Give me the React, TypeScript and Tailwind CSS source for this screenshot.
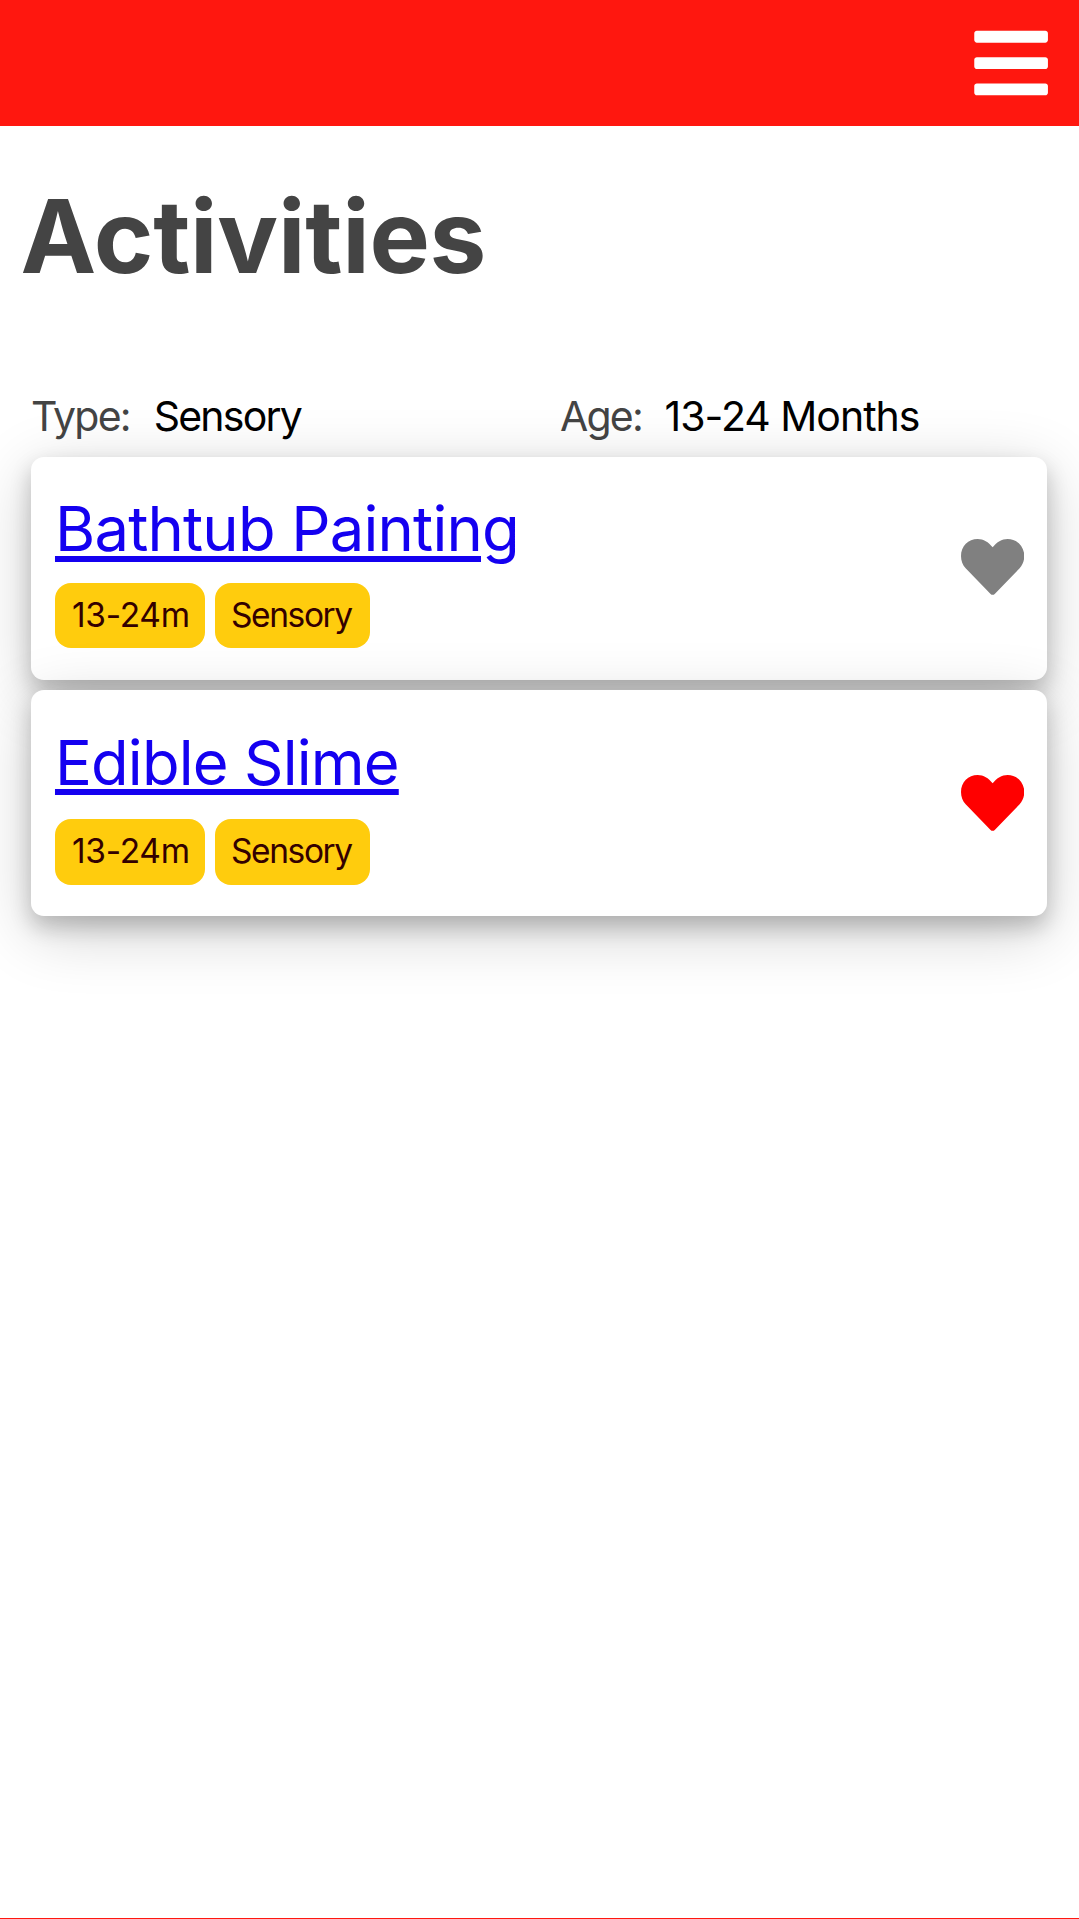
import { FaBars } from 'react-icons/fa'

const cardShadow = 'shadow-[0_10.5px_21px_0_rgba(0,0,0,0.2),0_15.7px_64px_0_rgba(0,0,0,0.2)]'

function Heart({ className }: { className: string }) {
  return (
    <svg viewBox="0 0 190 168" fill="currentColor" className={className} aria-hidden="true">
      <path d="M95 25C82 9 68 0 50 0C22 0 0 22 0 51C0 65 5 78 14 88L88 164Q95 171 102 164L176 88C185 78 190 65 190 51C190 22 168 0 140 0C122 0 108 9 95 25Z" />
    </svg>
  )
}

function Tag({ children, className }: { children: string; className: string }) {
  return (
    <span className={`flex h-[65.5px] items-center rounded-[16px] bg-[#ffcc0d] text-[33.5px] leading-none whitespace-nowrap text-[#330000] ${className}`}>
      {children}
    </span>
  )
}

function Activity({ title, liked, className, tagGap, titleClass }: { title: string; liked: boolean; className: string; tagGap: string; titleClass: string }) {
  return (
    <article className={`flex justify-between rounded-[13px] bg-white pr-[23.3px] pl-[23.7px] ${cardShadow} ${className}`}>
      <div className="flex flex-col items-start">
        <a href="#" className={`text-[61.5px] leading-[76px] text-[#1400f0] underline decoration-[5.5px] ${titleClass}`}>
          {title}
        </a>
        <div className={`flex gap-[10px] ${tagGap}`}>
          <Tag className="w-[150px] pl-[17px] tracking-[-0.3px]">13-24m</Tag>
          <Tag className="w-[155px] pl-[16px] tracking-[-1.4px]">Sensory</Tag>
        </div>
      </div>
      <Heart className={`h-[56px] w-[63.3px] ${liked ? 'mt-[50.3px] text-[#ff0000]' : 'mt-[48.3px] text-[#808080]'}`} />
    </article>
  )
}

export default function App() {
  return (
    <div className="flex h-[1919px] flex-col overflow-hidden bg-white font-['Inter',sans-serif]">
      <header className="flex h-[126px] shrink-0 items-center justify-end bg-[#ff170f] pr-[26px]">
        <FaBars className="size-[84.2px] text-white" />
      </header>
      <h1 className="mt-[49px] pl-[20.5px] text-[101.5px] leading-[122px] font-bold tracking-[-0.25px] text-[#444444]">Activities</h1>
      <div className="mt-[89px] flex h-[71px] px-[31px] pt-[5px] text-[41px] leading-[50px] tracking-[-1.8px] text-black">
        <div className="flex w-[529px] gap-[24px]">
          <span className="text-[#444444]">Type:</span>
          <span>Sensory</span>
        </div>
        <div className="flex gap-[22.5px]">
          <span className="text-[#444444]">Age:</span>
          <span className="tracking-[-1px]">13-24 Months</span>
        </div>
      </div>
      <main className="flex flex-col gap-[10px] pr-[31.7px] pl-[31.3px]">
        <Activity title="Bathtub Painting" liked={false} className="h-[223px] pt-[34px]" tagGap="mt-[15.5px]" titleClass="tracking-[-0.8px] underline-offset-[5px]" />
        <Activity title="Edible Slime" liked className="h-[226px] pt-[35px]" tagGap="mt-[18px]" titleClass="tracking-[-0.87px] underline-offset-[4px]" />
      </main>
      <footer className="mt-auto h-px shrink-0 bg-[#ff170f]" />
    </div>
  )
}
